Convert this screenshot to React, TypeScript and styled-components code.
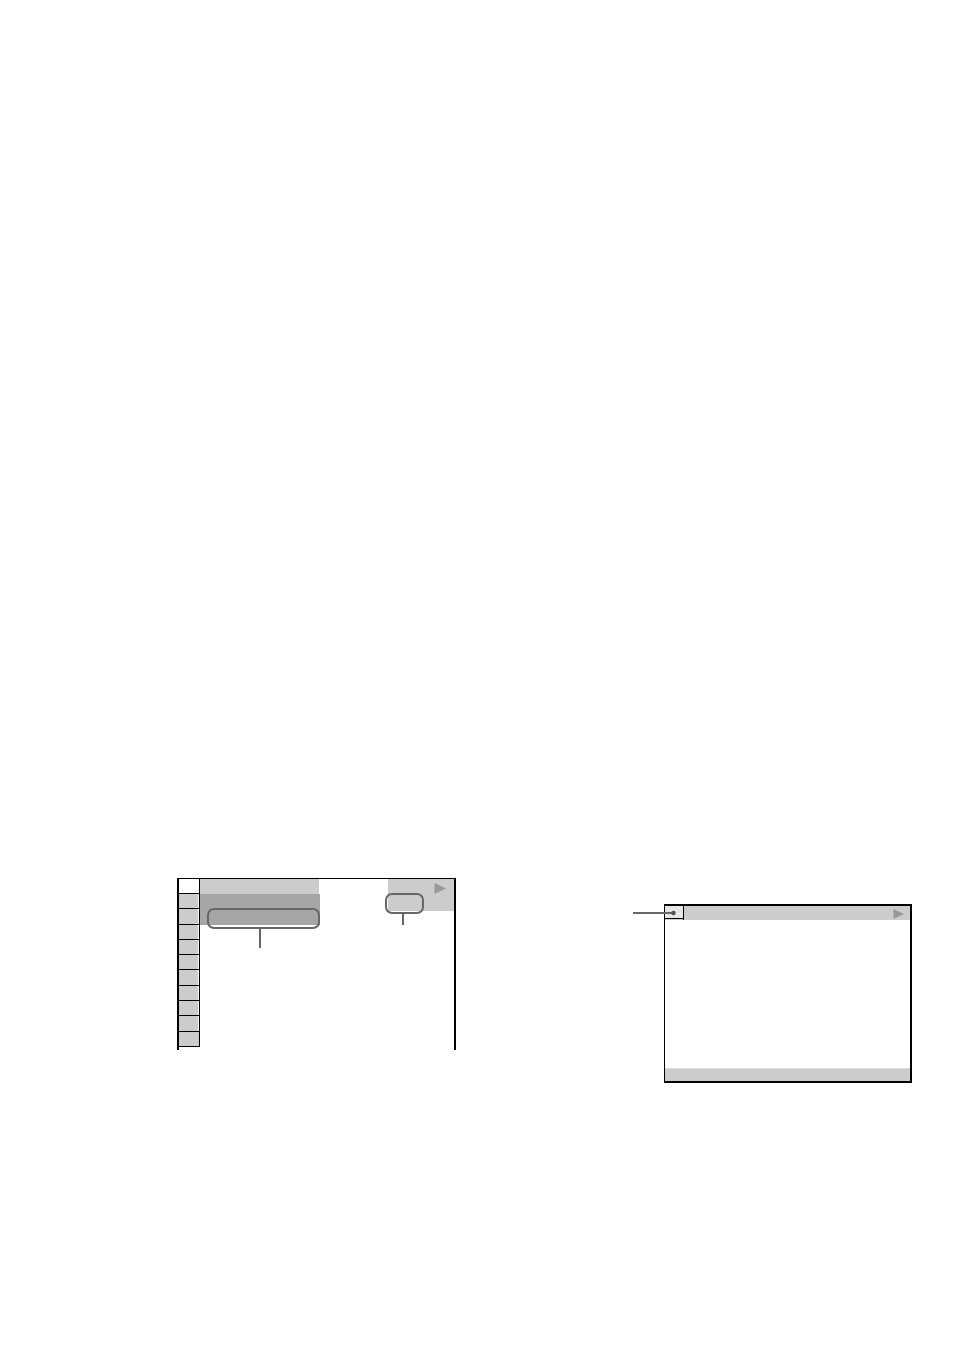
import React from "react";
import styled, { createGlobalStyle } from "styled-components";

const GlobalStyle = createGlobalStyle`
  *, *::before, *::after { box-sizing: border-box; }
  body { margin: 0; background: #fff; font-family: "Liberation Sans", Arial, sans-serif; }
`;

const Page = styled.main`
  display: grid;
  grid-template-columns: 177fr 279fr 208fr 248fr 42fr;
  align-items: start;
  min-height: 100vh;
  padding-top: 878px;
`;

const MenuScreen = styled.section`
  grid-column: 2;
  display: flex;
  align-items: flex-start;
  height: 172px;
  border: solid #000;
  border-width: 1px 2px 0 2px;
`;

const TabColumn = styled.div`
  flex: 0 0 21px;
  border-right: 1px solid #000;
`;

const tabFill = {
  active: "#fff",
  normal: "linear-gradient(to left, #f4f4f4 1px, #ccc 1px)",
  last: "#ccc",
};

const Tab = styled.div<{ $height: number; $kind: keyof typeof tabFill }>`
  height: ${(p) => p.$height}px;
  border-bottom: 1px solid #000;
  background: ${(p) => tabFill[p.$kind]};
`;

const MenuBody = styled.div`
  flex: 1;
  display: flex;
  justify-content: space-between;
`;

const TitleStack = styled.div`
  width: 120px;
`;

const TitleBar = styled.div`
  height: 15px;
  margin-right: 1px;
  background: #ccc;
`;

const Selection = styled.div`
  position: relative;
  height: 31px;
  background: #a6a6a6;
`;

const StatusArea = styled.div`
  position: relative;
  display: flex;
  justify-content: flex-end;
  width: 66px;
  height: 32px;
  padding: 4px 8px 0 0;
  background: #ccc;
`;

const Callout = styled.div<{ $left: number; $width: number; $stem: number; $stemLeft: number }>`
  position: absolute;
  left: ${(p) => p.$left}px;
  top: 14px;
  width: ${(p) => p.$width}px;
  height: 21px;
  border: 2px solid #666;
  border-radius: 7px;

  &::after {
    content: "";
    position: absolute;
    top: 19px;
    left: ${(p) => p.$stemLeft}px;
    width: 2px;
    height: ${(p) => p.$stem}px;
    background: #666;
  }
`;

const PictureScreen = styled.section`
  grid-column: 4;
  display: flex;
  flex-direction: column;
  height: 179px;
  margin-top: 26px;
  border: solid #000;
  border-width: 2px 2px 2px 1px;
`;

const PictureHeader = styled.header`
  display: flex;
  justify-content: space-between;
  height: 14px;
  padding-right: 6px;
  background: #ccc;
`;

const HeaderTab = styled.div`
  position: relative;
  width: 19px;
  border-right: 1px solid #000;
  background: linear-gradient(#e6e6e6 12px, #000 12px, #000 13px, #ccc 13px);
`;

const Pointer = styled.svg`
  position: absolute;
  right: 7px;
  top: 3px;
`;

const PlayIcon = styled.svg<{ $drop?: number }>`
  display: block;
  flex: none;
  margin-top: ${(p) => p.$drop ?? 0}px;
`;

const PictureBody = styled.div`
  flex: 1;
`;

const PictureFooter = styled.footer`
  height: 13px;
  border-top: 1px solid #ddd;
  background: #ccc;
`;

const tabHeights = [15, 15, 16, 15, 15, 15, 16, 15, 15, 16, 15];

function tabKind(index: number): keyof typeof tabFill {
  if (index === 0) return "active";
  return index === tabHeights.length - 1 ? "last" : "normal";
}

function Play({ drop, width, height }: { drop?: number; width: number; height: number }) {
  return (
    <PlayIcon $drop={drop} width={width} height={height} viewBox="0 0 12 11" preserveAspectRatio="none" aria-hidden="true">
      <path d="M0.5 0L12 5.5L0.5 11Z" fill="#999" />
    </PlayIcon>
  );
}

export default function App() {
  return (
    <>
      <GlobalStyle />
      <Page>
        <MenuScreen>
          <TabColumn>
            {tabHeights.map((height, i) => (
              <Tab key={i} $height={height} $kind={tabKind(i)} />
            ))}
          </TabColumn>
          <MenuBody>
            <TitleStack>
              <TitleBar />
              <Selection>
                <Callout $left={7} $width={113} $stem={19} $stemLeft={50} />
              </Selection>
            </TitleStack>
            <StatusArea>
              <Callout $left={-3} $width={39} $stem={11} $stemLeft={15} />
              <Play width={12} height={11} />
            </StatusArea>
          </MenuBody>
        </MenuScreen>
        <PictureScreen>
          <PictureHeader>
            <HeaderTab>
              <Pointer width="43" height="8" viewBox="0 0 43 8" aria-hidden="true">
                <path d="M0 4H40" stroke="#666" strokeWidth="2" />
                <circle cx="40.5" cy="4" r="2.3" fill="#555" />
              </Pointer>
            </HeaderTab>
            <Play drop={3} width={11} height={10} />
          </PictureHeader>
          <PictureBody />
          <PictureFooter />
        </PictureScreen>
      </Page>
    </>
  );
}
